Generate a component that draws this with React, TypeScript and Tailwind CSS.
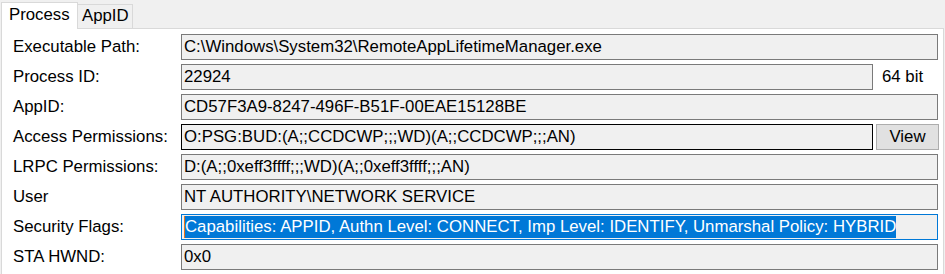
const rows: { label: string; value: string; kind?: "bits" | "view" | "selected" }[] = [
  { label: "Executable Path:", value: "C:\\Windows\\System32\\RemoteAppLifetimeManager.exe" },
  { label: "Process ID:", value: "22924", kind: "bits" },
  { label: "AppID:", value: "CD57F3A9-8247-496F-B51F-00EAE15128BE" },
  { label: "Access Permissions:", value: "O:PSG:BUD:(A;;CCDCWP;;;WD)(A;;CCDCWP;;;AN)", kind: "view" },
  { label: "LRPC Permissions:", value: "D:(A;;0xeff3ffff;;;WD)(A;;0xeff3ffff;;;AN)" },
  { label: "User", value: "NT AUTHORITY\\NETWORK SERVICE" },
  {
    label: "Security Flags:",
    value: "Capabilities: APPID, Authn Level: CONNECT, Imp Level: IDENTIFY, Unmarshal Policy: HYBRID",
    kind: "selected",
  },
  { label: "STA HWND:", value: "0x0" },
];

const App = () => {
  return (
    <div className="w-[945px] h-[274px] overflow-hidden bg-[#f0f0f0] text-[16.8px] text-black font-['Liberation_Sans',Arial,sans-serif]">
      {/* tab strip */}
      <div className="flex items-end h-[28px] pl-[1px]">
        <div className="relative z-10 -mb-px h-[27px] w-[77px] bg-white border border-b-0 border-[#d9d9d9] pl-[7px] leading-[24px]">
          Process
        </div>
        <div className="h-[24px] w-[55px] bg-[#f0f0f0] border border-l-0 border-b-0 border-[#d9d9d9] pl-[4px] leading-[22px]">
          AppID
        </div>
      </div>

      {/* panel */}
      <div className="ml-[1px] w-[943px] h-[246px] bg-white border border-b-0 border-[#d9d9d9] pl-[11px] pt-[5px] flex flex-col gap-[4px]">
        {rows.map((r) => (
          <div key={r.label} className="flex items-center h-[26px]">
            <div className="w-[168px] shrink-0 leading-[26px] whitespace-nowrap">{r.label}</div>

            {r.kind === "bits" && (
              <>
                <div className="w-[692px] h-[26px] bg-[#f0f0f0] border border-[#7a7a7a] px-[2px] leading-[24px] whitespace-nowrap">
                  {r.value}
                </div>
                <div className="ml-[9px] leading-[26px]">64 bit</div>
              </>
            )}

            {r.kind === "view" && (
              <>
                <div className="w-[692px] h-[26px] bg-[#f0f0f0] border border-black px-[2px] leading-[24px] whitespace-nowrap">
                  {r.value}
                </div>
                <button className="ml-[3px] w-[63px] h-[26px] bg-[#e1e1e1] border border-[#adadad] leading-[24px] text-center">
                  View
                </button>
              </>
            )}

            {r.kind === "selected" && (
              <div className="w-[757px] h-[26px] bg-[#f0f0f0] border border-[#0078d7] pl-[2px] py-[1px] flex whitespace-nowrap">
                <span className="w-px h-[22px] bg-[#e8751a]" />
                <span className="bg-[#0078d7] text-white leading-[22px] h-[22px]">{r.value}</span>
              </div>
            )}

            {!r.kind && (
              <div className="w-[757px] h-[26px] bg-[#f0f0f0] border border-[#7a7a7a] px-[2px] leading-[24px] whitespace-nowrap overflow-hidden">
                {r.value}
              </div>
            )}
          </div>
        ))}
      </div>
    </div>
  );
};

export default App;
